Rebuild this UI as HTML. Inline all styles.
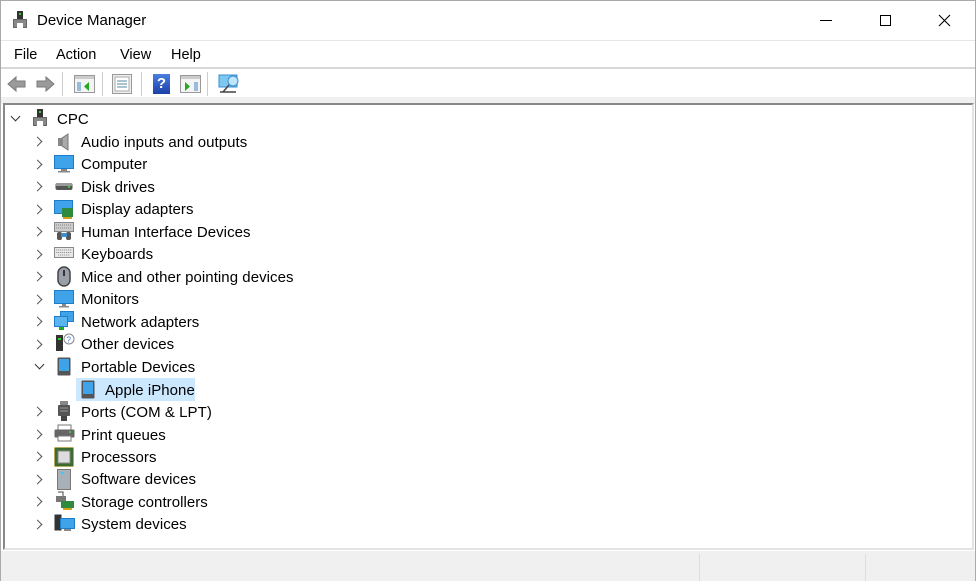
<!DOCTYPE html>
<html><head><meta charset="utf-8"><style>
*{margin:0;padding:0;box-sizing:border-box}
body{width:976px;height:581px;background:#fff;font-family:"Liberation Sans",sans-serif;color:#000;position:relative;overflow:hidden}
.a{position:absolute}
.t{font-size:14px;white-space:nowrap;line-height:18px}
.r{font-size:15px;margin-top:1px;letter-spacing:0.05px}
.chev{position:absolute;width:7px;height:7px;border-right:1.5px solid #555;border-bottom:1.5px solid #555;transform:rotate(-45deg)}
.chevd{position:absolute;width:7px;height:7px;border-right:1.5px solid #333;border-bottom:1.5px solid #333;transform:rotate(45deg)}
</style></head><body>
<div class="a" style="left:0;top:0;width:976px;height:581px;border:1px solid #aaa;border-bottom:none"></div>
<div class="a" style="left:13px;top:11px;width:14px;height:18px">
 <div class="a" style="left:4px;top:0;width:6px;height:8px;background:#333"></div>
 <div class="a" style="left:6px;top:2px;width:2px;height:2px;background:#3c3"></div>
 <div class="a" style="left:0;top:8px;width:14px;height:9px;background:#888;border:1px solid #666"></div>
 <div class="a" style="left:4px;top:12px;width:6px;height:5px;background:#fff"></div>
</div>
<div class="a t" style="left:37px;top:12px;font-size:15px">Device Manager</div>
<div class="a" style="left:820px;top:20px;width:12px;height:1px;background:#000"></div>
<div class="a" style="left:880px;top:15px;width:11px;height:11px;border:1px solid #000"></div>
<svg class="a" style="left:938px;top:14px" width="13" height="13"><path d="M1 1L12 12M12 1L1 12" stroke="#000" stroke-width="1.1"/></svg>
<div class="a" style="left:1px;top:40px;width:974px;height:1px;background:#e6e6e6"></div>
<div class="a t" style="left:14px;top:46px;font-size:14.5px">File</div>
<div class="a t" style="left:56px;top:46px;font-size:14.5px">Action</div>
<div class="a t" style="left:120px;top:46px;font-size:14.5px">View</div>
<div class="a t" style="left:171px;top:46px;font-size:14.5px">Help</div>
<div class="a" style="left:1px;top:67px;width:974px;height:2px;background:#d8d8d8"></div>
<svg class="a" style="left:7px;top:75px" width="50" height="18">
 <path d="M1 9L9 2V6H18V12H9V16Z" fill="#9a9a9a" stroke="#7a7a7a"/>
 <path d="M47 9L39 2V6H30V12H39V16Z" fill="#9a9a9a" stroke="#7a7a7a"/>
</svg>
<div class="a" style="left:62px;top:72px;width:1px;height:24px;background:#ccc"></div>
<svg class="a" style="left:74px;top:75px" width="22" height="19"><rect x="0.5" y="0.5" width="20" height="17" fill="#f4f4f4" stroke="#999"/><rect x="1" y="1" width="19" height="3" fill="#ccc"/><rect x="3" y="7" width="4" height="9" fill="#9bd"/><path d="M15 7L10 11.5L15 16Z" fill="#2a2"/></svg>
<div class="a" style="left:102px;top:72px;width:1px;height:24px;background:#ccc"></div>
<svg class="a" style="left:112px;top:74px" width="21" height="21"><rect x="0.5" y="0.5" width="19" height="19" fill="#eee" stroke="#999"/><rect x="3" y="3" width="14" height="14" fill="#fff" stroke="#aaa"/><path d="M5 7H15M5 10H15M5 13H15" stroke="#58a"/></svg>
<div class="a" style="left:141px;top:72px;width:1px;height:24px;background:#ccc"></div>
<div class="a" style="left:153px;top:74px;width:17px;height:20px;background:linear-gradient(#4a7fe0,#1c3fa8);color:#fff;font-weight:bold;font-size:15px;text-align:center;line-height:20px">?</div>
<svg class="a" style="left:180px;top:75px" width="22" height="19"><rect x="0.5" y="0.5" width="20" height="17" fill="#f4f4f4" stroke="#999"/><rect x="1" y="1" width="19" height="3" fill="#ccc"/><rect x="14" y="7" width="4" height="9" fill="#9bd"/><path d="M5 7L10 11.5L5 16Z" fill="#2a2"/></svg>
<div class="a" style="left:207px;top:72px;width:1px;height:24px;background:#ccc"></div>
<svg class="a" style="left:218px;top:74px" width="24" height="20"><rect x="1" y="1" width="18" height="12" fill="#7cc8f0" stroke="#3a8ed0"/><circle cx="15" cy="7" r="5" fill="#bfe6fb" stroke="#3a8ed0"/><path d="M11 11L5 18M2 18H18" stroke="#444" stroke-width="1.5"/></svg>
<div class="a" style="left:1px;top:97px;width:974px;height:7px;background:#f0f0f0"></div>
<div class="a" style="left:3px;top:103px;width:971px;height:447px;border-top:2px solid #888;border-left:2px solid #888;border-right:2px solid #e3e3e3;border-bottom:2px solid #e3e3e3"></div>
<div class="a" style="left:1px;top:551px;width:974px;height:30px;background:#f0f0f0"></div>
<div class="a" style="left:699px;top:554px;width:1px;height:27px;background:#ddd"></div>
<div class="a" style="left:865px;top:554px;width:1px;height:27px;background:#ddd"></div>
<div class="chevd" style="left:12px;top:113px"></div>
<div class="a" style="left:33px;top:109px;width:14px;height:18px">
 <div class="a" style="left:4px;top:0;width:6px;height:8px;background:#333"></div>
 <div class="a" style="left:6px;top:2px;width:2px;height:2px;background:#3c3"></div>
 <div class="a" style="left:0;top:8px;width:14px;height:9px;background:#888;border:1px solid #666"></div>
 <div class="a" style="left:4px;top:12px;width:6px;height:5px;background:#fff"></div>
</div>
<div class="a t r" style="left:57px;top:110px">CPC</div>

<div class="chev" style="left:34px;top:138px"></div>
<svg class="a" style="left:55px;top:133px" width="18" height="18"><rect x="3" y="5" width="4" height="8" fill="#888"/><path d="M7 5L13 1V17L7 13Z" fill="#aaa" stroke="#777"/></svg>
<div class="a t r" style="left:81px;top:133px">Audio inputs and outputs</div>

<div class="chev" style="left:34px;top:161px"></div>
<svg class="a" style="left:54px;top:155px" width="20" height="18"><rect x="0.5" y="0.5" width="19" height="13" fill="#3fa3ea" stroke="#1e7cc8"/><rect x="7" y="14" width="6" height="2" fill="#888"/><rect x="4" y="16" width="12" height="1.5" fill="#888"/></svg>
<div class="a t r" style="left:81px;top:155px">Computer</div>

<div class="chev" style="left:34px;top:183px"></div>
<svg class="a" style="left:55px;top:180px" width="18" height="12"><rect x="0.5" y="3" width="17" height="7" rx="2" fill="#555"/><rect x="1" y="3" width="16" height="3" fill="#999"/><rect x="13" y="6" width="2" height="2" fill="#3c3"/></svg>
<div class="a t r" style="left:81px;top:178px">Disk drives</div>

<div class="chev" style="left:34px;top:206px"></div>
<svg class="a" style="left:54px;top:200px" width="20" height="20"><rect x="0.5" y="0.5" width="18" height="13" fill="#3fa3ea" stroke="#1e7cc8"/><rect x="8" y="8" width="11" height="9" fill="#2e8b3e"/><rect x="9" y="17" width="9" height="2" fill="#d4a017"/></svg>
<div class="a t r" style="left:81px;top:200px">Display adapters</div>

<div class="chev" style="left:34px;top:228px"></div>
<svg class="a" style="left:54px;top:222px" width="20" height="20"><rect x="0.5" y="0.5" width="19" height="9" fill="#ccc" stroke="#888"/><path d="M2 3H18M2 6H18" stroke="#888" stroke-dasharray="1 1"/><rect x="3" y="10" width="5" height="8" rx="2" fill="#555"/><rect x="12" y="10" width="5" height="8" rx="2" fill="#555"/><rect x="7" y="11" width="6" height="4" fill="#3a8ed0"/></svg>
<div class="a t r" style="left:81px;top:223px">Human Interface Devices</div>

<div class="chev" style="left:34px;top:251px"></div>
<svg class="a" style="left:54px;top:247px" width="20" height="12"><rect x="0.5" y="0.5" width="19" height="10" fill="#e8e8e8" stroke="#888"/><path d="M2 3H18M2 5.5H18M4 8H16" stroke="#999" stroke-dasharray="1.2 0.8"/></svg>
<div class="a t r" style="left:81px;top:245px">Keyboards</div>

<div class="chev" style="left:34px;top:273px"></div>
<svg class="a" style="left:57px;top:266px" width="14" height="22"><rect x="1" y="1" width="12" height="19" rx="6" fill="#9aa0a8" stroke="#444" stroke-width="1.5"/><rect x="6" y="4" width="2" height="6" fill="#333"/></svg>
<div class="a t r" style="left:81px;top:268px">Mice and other pointing devices</div>

<div class="chev" style="left:34px;top:296px"></div>
<svg class="a" style="left:54px;top:290px" width="20" height="18"><rect x="0.5" y="0.5" width="19" height="13" fill="#3fa3ea" stroke="#1e7cc8"/><rect x="8" y="14" width="4" height="2" fill="#888"/><rect x="5" y="16" width="10" height="1.5" fill="#888"/></svg>
<div class="a t r" style="left:81px;top:290px">Monitors</div>

<div class="chev" style="left:34px;top:318px"></div>
<svg class="a" style="left:54px;top:311px" width="20" height="20"><rect x="6.5" y="0.5" width="13" height="10" fill="#3fa3ea" stroke="#1e7cc8"/><rect x="0.5" y="5.5" width="13" height="10" fill="#5ab4f0" stroke="#1e7cc8"/><rect x="5" y="16" width="5" height="3" fill="#2a2"/></svg>
<div class="a t r" style="left:81px;top:313px">Network adapters</div>

<div class="chev" style="left:34px;top:341px"></div>
<svg class="a" style="left:55px;top:333px" width="20" height="20"><rect x="1" y="2" width="7" height="16" fill="#333"/><rect x="3" y="5" width="3" height="2" fill="#3c3"/><circle cx="14" cy="6" r="5" fill="#fff" stroke="#888"/><text x="11.5" y="9.5" font-size="8" fill="#3a6fd0" font-family="Liberation Sans">?</text></svg>
<div class="a t r" style="left:81px;top:335px">Other devices</div>

<div class="chevd" style="left:36px;top:361px"></div>
<svg class="a" style="left:57px;top:357px" width="14" height="20"><rect x="0.5" y="0.5" width="13" height="18" rx="1" fill="#555"/><rect x="2" y="2" width="10" height="12" fill="#3fa3ea"/></svg>
<div class="a t r" style="left:81px;top:358px">Portable Devices</div>

<div class="a" style="left:76px;top:378px;width:119px;height:23px;background:#cce8ff"></div>
<svg class="a" style="left:81px;top:380px" width="14" height="19"><rect x="0.5" y="0.5" width="13" height="18" rx="1" fill="#555"/><rect x="2" y="2" width="10" height="12" fill="#3fa3ea"/></svg>
<div class="a t r" style="left:105px;top:381px">Apple iPhone</div>

<div class="chev" style="left:34px;top:408px"></div>
<svg class="a" style="left:57px;top:401px" width="14" height="22"><rect x="3" y="0" width="8" height="4" fill="#888"/><rect x="1" y="4" width="12" height="11" rx="1" fill="#555"/><path d="M3 7H11M3 10H11" stroke="#999"/><rect x="4" y="15" width="6" height="5" fill="#444"/></svg>
<div class="a t r" style="left:81px;top:403px">Ports (COM &amp; LPT)</div>

<div class="chev" style="left:34px;top:431px"></div>
<svg class="a" style="left:54px;top:424px" width="21" height="19"><rect x="4" y="1" width="13" height="5" fill="#fff" stroke="#777"/><rect x="0.5" y="5.5" width="20" height="8" rx="1" fill="#666"/><rect x="4" y="12" width="13" height="5" fill="#fff" stroke="#777"/><rect x="15" y="7" width="2" height="2" fill="#3c3"/></svg>
<div class="a t r" style="left:81px;top:426px">Print queues</div>

<div class="chev" style="left:34px;top:453px"></div>
<svg class="a" style="left:54px;top:447px" width="20" height="20"><rect x="0.5" y="0.5" width="19" height="19" fill="#3b6b2e" stroke="#c9a227" stroke-dasharray="1 1"/><rect x="4" y="4" width="12" height="12" fill="#ddd" stroke="#888"/></svg>
<div class="a t r" style="left:81px;top:448px">Processors</div>

<div class="chev" style="left:34px;top:476px"></div>
<svg class="a" style="left:57px;top:469px" width="14" height="21"><rect x="0.5" y="0.5" width="13" height="20" fill="#a8b0b8" stroke="#777"/><rect x="4" y="3" width="3" height="2" fill="#3cf"/></svg>
<div class="a t r" style="left:81px;top:470px">Software devices</div>

<div class="chev" style="left:34px;top:498px"></div>
<svg class="a" style="left:55px;top:491px" width="20" height="20"><rect x="1" y="5" width="10" height="6" fill="#777"/><path d="M3 1H8V5" stroke="#444" fill="none"/><rect x="6" y="10" width="13" height="7" fill="#2e8b3e"/><rect x="8" y="17" width="9" height="2" fill="#d4a017"/></svg>
<div class="a t r" style="left:81px;top:493px">Storage controllers</div>

<div class="chev" style="left:34px;top:521px"></div>
<svg class="a" style="left:54px;top:514px" width="21" height="19"><rect x="0.5" y="0.5" width="7" height="16" fill="#333"/><rect x="6.5" y="4.5" width="14" height="10" fill="#3fa3ea" stroke="#1e7cc8"/><rect x="10" y="15" width="7" height="2" fill="#888"/></svg>
<div class="a t r" style="left:81px;top:515px">System devices</div>
</body></html>
